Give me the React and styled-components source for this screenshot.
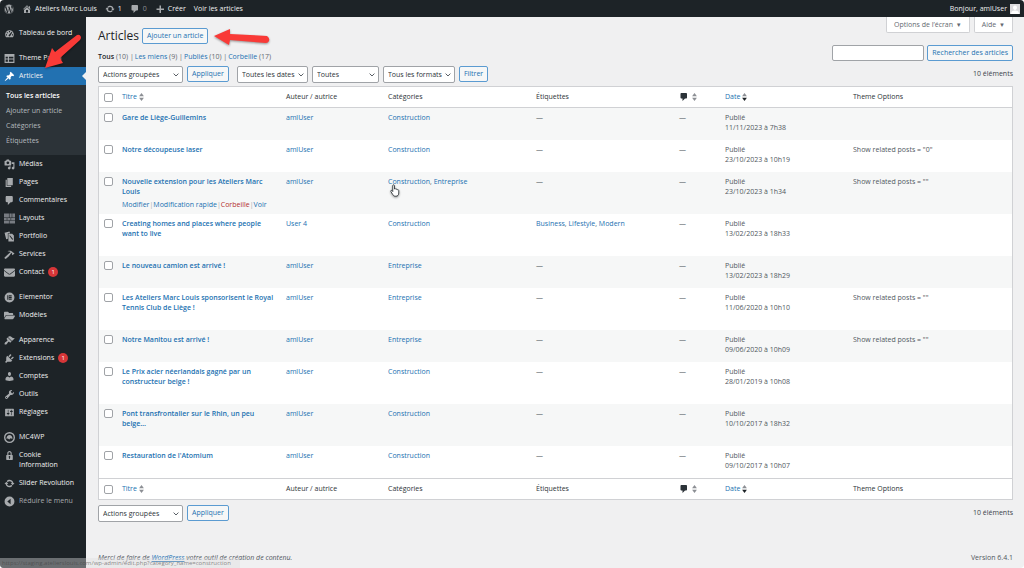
import React from 'react';
import styled, { createGlobalStyle } from 'styled-components';
import { FaWordpress, FaFolderOpen, FaEnvelope } from 'react-icons/fa';

const paths = {
  home: 'M16 8.5l1.53 1.53-1.06 1.06L10 4.6l-6.47 6.49-1.06-1.06L10 2.5l4 4v-2h2v4zm-6-2.46l6 5.99V18H4v-5.97zM12 17v-5H8v5h4z',
  update: 'M10.2 3.28c3.53 0 6.43 2.61 6.92 6h2.08l-3.5 4-3.5-4h2.32c-.45-1.97-2.21-3.45-4.32-3.45-1.45 0-2.73.71-3.54 1.78L4.95 5.66C6.23 4.2 8.11 3.28 10.2 3.28zm-.4 13.44c-3.52 0-6.43-2.61-6.92-6H.8l3.5-4c1.17 1.33 2.33 2.67 3.5 4H5.48c.45 1.97 2.21 3.45 4.32 3.45 1.45 0 2.73-.71 3.54-1.78l1.71 1.95c-1.28 1.46-3.15 2.38-5.25 2.38z',
  comment: 'M5 2h9c1.1 0 2 .9 2 2v7c0 1.1-.9 2-2 2h-2l-5 5v-5H5c-1.1 0-2-.9-2-2V4c0-1.1.9-2 2-2z',
  plus: 'M9 3h3v6h6v3h-6v6H9v-6H3V9h6V3z',
  dashboard: 'M3.76 17h12.48c1.1-1.4 1.76-3.17 1.76-5.1C18 7.54 14.42 4 10 4s-8 3.54-8 7.9c0 1.93.66 3.7 1.76 5.1zM9 5.5h2v2H9v-2zM5 7.5h2v2H5v-2zm-1.500 4h2v2h-2v-2zm11 0h2v2h-2v-2zM14 7l1 1-3.500 6.200c-.6 1-1.500 1.300-2.300.9-.9-.5-1-1.600-.3-2.400L14 7z',
  panel: 'M1 2h18v16H1V2zm2 5v3h4V7H3zm6 0v3h8V7H9zm-6 5v4h4v-4H3zm6 0v4h8v-4H9z',
  pin: 'M10.44 3.02l1.82-1.82 6.36 6.35-1.83 1.82c-1.05-.68-2.48-.57-3.41.36l-.75.75c-.92.93-1.04 2.35-.35 3.41l-1.83 1.82-2.41-2.41-2.8 2.79c-.42.42-3.38 2.71-3.8 2.29s1.86-3.39 2.28-3.81l2.79-2.79L4.1 9.36l1.83-1.82c1.05.69 2.48.57 3.4-.36l.75-.75c.93-.92 1.05-2.35.36-3.41z',
  media: 'M13 11V4c0-.55-.45-1-1-1h-1.67L9 1H5L3.67 3H2c-.55 0-1 .45-1 1v7c0 .55.45 1 1 1h10c.55 0 1-.45 1-1zM7 4.5c1.38 0 2.5 1.12 2.5 2.5S8.38 9.5 7 9.5 4.5 8.38 4.5 7 5.62 4.5 7 4.5zM14 6h5v10.5c0 1.38-1.12 2.5-2.5 2.5S14 17.88 14 16.5s1.12-2.5 2.5-2.5c.17 0 .34.02.5.05V9h-3V6zm-4 8.05V13h2v3.5c0 1.38-1.12 2.5-2.5 2.5S7 17.88 7 16.5 8.12 14 9.5 14c.17 0 .34.02.5.05z',
  pages: 'M6 15V2h10v13H6zm-1 1h8v2H3V5h2v11z',
  layouts: 'M0 1h9v7H0V1zm10 0h4v7h-4V1zm5 0h5v7h-5V1zM0 9h5v4H0V9zm6 0h6v4H6V9zm7 0h7v4h-7V9zM0 14h9v5H0v-5zm10 0h10v5H10v-5z',
  portfolio: 'M1 3l9-2 1 3H7v10l-3 1L1 3zm7 2h7l3 3v11H8V5zm2 3v1l5 7h1v-2l-5-6h-1z',
  hammer: 'M17.7 6.32l1.41 1.42-3.47 3.41-1.42-1.42.84-.82c-.32-.76-.81-1.57-1.51-2.31l-4.61 6.59-5.26 4.7c-.39.39-1.02.39-1.42 0l-1.2-1.21c-.39-.39-.39-1.02 0-1.41l10.97-9.92c-1.37-.86-3.21-1.46-5.67-1.48 2.7-.82 4.95-.93 6.58-.3 1.7.66 2.82 2.2 3.91 3.58z',
  elementor: 'M10 1a9 9 0 100 18 9 9 0 000-18zM6 6h2v8H6V6zm3 0h5v2H9V6zm0 3h5v2H9V9zm0 3h5v2H9v-2z',
  appearance: 'M14.48 11.06L7.41 3.99l1.5-1.5c.5-.56 2.3-.47 3.51.32 1.21.8 1.43 1.28 2.91 2.1 1.18.64 2.45 1.26 4.45.85zm-.71.71L6.7 4.7 4.93 6.47c-.39.39-.39 1.02 0 1.41l1.06 1.06c.39.39.39 1.03 0 1.42-.6.6-1.43 1.11-2.21 1.69-.35.26-.7.53-1.01.84C1.43 14.23.4 16.08 1.4 17.07c.99 1 2.84-.03 4.18-1.36.31-.31.58-.66.85-1.02.57-.78 1.08-1.61 1.69-2.21.39-.39 1.02-.39 1.41 0l1.06 1.06c.39.39 1.02.39 1.41 0z',
  plugins: 'M13.11 4.36L9.87 7.6 8 5.73l3.24-3.24c.35-.34 1.05-.2 1.56.32.52.51.66 1.21.31 1.55zm-8 1.77l.91-1.12 9.01 9.01-1.19.84c-.71.71-2.63 1.16-3.82 1.16H6.14L4.9 17.26c-.59.59-1.54.59-2.12 0-.59-.58-.59-1.53 0-2.12l1.24-1.24v-3.88c0-1.13.4-3.19 1.09-3.89zm7.26 3.97l3.24-3.24c.34-.35 1.04-.21 1.55.31.52.51.66 1.21.31 1.55l-3.24 3.25z',
  users: 'M10 9.25c-2.27 0-2.73-3.44-2.73-3.44C7 4.02 7.82 2 9.97 2c2.16 0 2.98 2.02 2.71 3.81 0 0-.41 3.44-2.68 3.44zm0 2.57L12.72 10c2.39 0 4.52 2.33 4.52 4.53v2.49s-3.65 1.13-7.24 1.13c-3.65 0-7.24-1.13-7.24-1.13v-2.49c0-2.25 1.94-4.48 4.47-4.48z',
  tools: 'M16.68 9.77c-1.34 1.34-3.3 1.67-4.95.99l-5.41 6.52c-.99.99-2.59.99-3.58 0s-.99-2.59 0-3.57l6.52-5.42c-.68-1.65-.35-3.61.99-4.95 1.28-1.28 3.12-1.62 4.72-1.06l-2.89 2.89 2.82 2.82 2.86-2.87c.53 1.58.18 3.39-1.08 4.65zM3.81 16.21c.4.39 1.04.39 1.43 0 .4-.4.4-1.04 0-1.43-.39-.4-1.03-.4-1.43 0-.39.39-.39 1.03 0 1.43z',
  settings: 'M18 16V4c0-.55-.45-1-1-1H3c-.55 0-1 .45-1 1v12c0 .55.45 1 1 1h14c.55 0 1-.45 1-1zM8 11h1c.55 0 1 .45 1 1s-.45 1-1 1H8v1.5c0 .28-.22.5-.5.5s-.5-.22-.5-.5V13H6c-.55 0-1-.45-1-1s.45-1 1-1h1V5.5c0-.28.22-.5.5-.5s.5.22.5.5V11zm5-2h-1c-.55 0-1-.45-1-1s.45-1 1-1h1V5.5c0-.28.22-.5.5-.5s.5.22.5.5V7h1c.55 0 1 .45 1 1s-.45 1-1 1h-1v5.5c0 .28-.22.5-.5.5s-.5-.22-.5-.5V9z',
  mailchimp: 'M10 0a10 10 0 110 20 10 10 0 010-20zm0 2.500a7.500 7.500 0 100 15 7.500 7.500 0 000-15zM4.500 12c0-3.500 2.500-6.500 5.500-6.500s5.500 3 5.500 6.500c-1.500 1-2.500-.5-3.500-.5s-1.500 2-2.500 2-1.500-1.500-2.500-1.500-1.500 1-2.500 0z',
  lock: 'M14 9h1c.55 0 1 .45 1 1v7c0 .55-.45 1-1 1H5c-.55 0-1-.45-1-1v-7c0-.55.45-1 1-1h1V6c0-2.21 1.79-4 4-4s4 1.79 4 4v3zm-2 0V6c0-1.1-.9-2-2-2s-2 .9-2 2v3h4zm-1 7l-.36-2.15c.51-.24.86-.75.86-1.35 0-.83-.67-1.5-1.5-1.5s-1.5.67-1.5 1.5c0 .6.35 1.11.86 1.35L9 16h2z',
  collapse: 'M10 1a9 9 0 110 18 9 9 0 010-18zm2 4l-6 5 6 5V5z',
};

const Glyph = ({ name }) => (
  <svg viewBox="0 0 20 20" fill="currentColor" fillRule="evenodd" aria-hidden="true">
    <path d={paths[name]} />
  </svg>
);

const Sorter = ({ active }) => (
  <SortIcon viewBox="0 0 6 10" aria-hidden="true">
    <path d="M3 0l3 4H0z" fill="#8c8f94" />
    <path d="M3 10L0 6h6z" fill={active ? '#1d2327' : '#8c8f94'} />
  </SortIcon>
);

const menu = [
  [{ icon: <Glyph name="dashboard" />, label: 'Tableau de bord' }],
  [
    { icon: <Glyph name="panel" />, label: 'Theme Panel' },
    {
      icon: <Glyph name="pin" />,
      label: 'Articles',
      sub: ['Tous les articles', 'Ajouter un article', 'Catégories', 'Étiquettes'],
    },
    { icon: <Glyph name="media" />, label: 'Médias' },
    { icon: <Glyph name="pages" />, label: 'Pages' },
    { icon: <Glyph name="comment" />, label: 'Commentaires' },
    { icon: <Glyph name="layouts" />, label: 'Layouts', dim: true },
    { icon: <Glyph name="portfolio" />, label: 'Portfolio' },
    { icon: <Glyph name="hammer" />, label: 'Services' },
    { icon: <FaEnvelope />, label: 'Contact', count: 1 },
  ],
  [
    { icon: <Glyph name="elementor" />, label: 'Elementor' },
    { icon: <FaFolderOpen />, label: 'Modèles' },
  ],
  [
    { icon: <Glyph name="appearance" />, label: 'Apparence' },
    { icon: <Glyph name="plugins" />, label: 'Extensions', count: 1 },
    { icon: <Glyph name="users" />, label: 'Comptes' },
    { icon: <Glyph name="tools" />, label: 'Outils' },
    { icon: <Glyph name="settings" />, label: 'Réglages' },
  ],
  [
    { icon: <Glyph name="mailchimp" />, label: 'MC4WP' },
    { icon: <Glyph name="lock" />, label: 'Cookie Information' },
    { icon: <Glyph name="update" />, label: 'Slider Revolution' },
    { icon: <Glyph name="collapse" />, label: 'Réduire le menu', muted: true },
  ],
];

const posts = [
  { title: 'Gare de Liège-Guillemins', cats: ['Construction'], date: '11/11/2023 à 7h38' },
  { title: 'Notre découpeuse laser', cats: ['Construction'], date: '23/10/2023 à 10h19', options: 'Show related posts = "0"' },
  { title: 'Nouvelle extension pour les Ateliers Marc Louis', cats: ['Construction', 'Entreprise'], date: '23/10/2023 à 1h34', options: 'Show related posts = ""', hovered: true },
  { title: 'Creating homes and places where people want to live', author: 'User 4', cats: ['Construction'], tags: ['Business', 'Lifestyle', 'Modern'], date: '13/02/2023 à 18h33' },
  { title: 'Le nouveau camion est arrivé !', cats: ['Entreprise'], date: '13/02/2023 à 18h29' },
  { title: 'Les Ateliers Marc Louis sponsorisent le Royal Tennis Club de Liège !', cats: ['Entreprise'], date: '11/06/2020 à 10h10', options: 'Show related posts = ""' },
  { title: 'Notre Manitou est arrivé !', cats: ['Entreprise'], date: '09/06/2020 à 10h09', options: 'Show related posts = ""' },
  { title: 'Le Prix acier néerlandais gagné par un constructeur belge !', cats: ['Construction'], date: '28/01/2019 à 10h08' },
  { title: 'Pont transfrontalier sur le Rhin, un peu belge…', cats: ['Construction'], date: '10/10/2017 à 18h32' },
  { title: "Restauration de l'Atomium", cats: ['Construction'], date: '09/10/2017 à 10h07' },
];

const views = [
  ['Tous', 10],
  ['Les miens', 9],
  ['Publiés', 10],
  ['Corbeille', 17],
];

const Links = ({ items }) =>
  items.map((item, i) => (
    <React.Fragment key={item}>
      {i > 0 && ', '}
      <Link href="#">{item}</Link>
    </React.Fragment>
  ));

const Dropdown = ({ label, text, width }) => (
  <SelectBox $width={width}>
    <select aria-label={label}>
      <option>{text}</option>
    </select>
    <svg viewBox="0 0 10 6" aria-hidden="true">
      <path d="M1 1l4 4 4-4" fill="none" stroke="#50575e" strokeWidth="1.600" />
    </svg>
  </SelectBox>
);

const BulkActions = () => (
  <Group>
    <Dropdown label="Actions groupées" text="Actions groupées" width={85} />
    <Button>Appliquer</Button>
  </Group>
);

const HeaderCells = () => (
  <tr>
    <th><Check type="checkbox" aria-label="Tout sélectionner" /></th>
    <th><Link href="#">Titre <Sorter /></Link></th>
    <th>Auteur / autrice</th>
    <th>Catégories</th>
    <th>Étiquettes</th>
    <th><CommentHead href="#" aria-label="Commentaires"><Glyph name="comment" /><Sorter /></CommentHead></th>
    <th><Link href="#">Date <Sorter active /></Link></th>
    <th>Theme Options</th>
  </tr>
);

const App = () => {
  return (
    <Page>
      <GlobalStyle />
      <AdminBar>
        <BarLink href="#" aria-label="WordPress"><FaWordpress /></BarLink>
        <BarLink href="#"><Glyph name="home" />Ateliers Marc Louis</BarLink>
        <BarLink href="#"><Glyph name="update" />1</BarLink>
        <BarLink href="#" $dim><Glyph name="comment" />0</BarLink>
        <BarLink href="#"><Glyph name="plus" />Créer</BarLink>
        <BarLink href="#">Voir les articles</BarLink>
        <Account href="#">
          Bonjour, amlUser
          <svg viewBox="0 0 20 20" aria-hidden="true">
            <path fill="#dcdcde" d="M0 0h20v20H0z" />
            <path fill="#fff" d="M10 3a4 4 0 014 4c0 3-2 5-4 5S6 10 6 7a4 4 0 014-4zM2 20c0-5 3-7 8-7s8 2 8 7z" />
          </svg>
        </Account>
      </AdminBar>

      <Body>
        <Sidebar>
          {menu.map((group, i) => (
            <MenuGroup key={i}>
              {group.map((item) => (
                <li key={item.label}>
                  <MenuLink href="#" $current={Boolean(item.sub)} $muted={item.muted}>
                    <MenuIcon $current={Boolean(item.sub)} $dim={item.dim}>{item.icon}</MenuIcon>
                    <span>{item.label}</span>
                    {item.count && <Badge>{item.count}</Badge>}
                  </MenuLink>
                  {item.sub && (
                    <SubMenu>
                      {item.sub.map((label, n) => (
                        <li key={label}><SubLink href="#" $current={n === 0}>{label}</SubLink></li>
                      ))}
                    </SubMenu>
                  )}
                </li>
              ))}
            </MenuGroup>
          ))}
        </Sidebar>

        <Content>
          <TitleRow>
            <Heading>
              <h1>Articles</h1>
              <Button>Ajouter un article</Button>
            </Heading>
            <ScreenMeta>
              <MetaTab>Options de l’écran <i>▼</i></MetaTab>
              <MetaTab>Aide <i>▼</i></MetaTab>
            </ScreenMeta>
          </TitleRow>

          <ViewsRow>
            <Views>
              {views.map(([label, count], i) => (
                <li key={label}>
                  <ViewLink href="#" $current={i === 0}>{label}</ViewLink> ({count}){i < views.length - 1 && ' |'}
                </li>
              ))}
            </Views>
            <Group $gap={3}>
              <SearchInput type="search" aria-label="Rechercher des articles" />
              <Button>Rechercher des articles</Button>
            </Group>
          </ViewsRow>

          <TableNav>
            <BulkActions />
            <Group>
              <Dropdown label="Filtrer par date" text="Toutes les dates" width={71} />
              <Dropdown label="Filtrer par catégorie" text="Toutes" width={67} />
              <Dropdown label="Filtrer par format" text="Tous les formats" width={72} />
              <Button>Filtrer</Button>
            </Group>
            <Total>10 éléments</Total>
          </TableNav>

          <Table>
            <colgroup>
              <Col $w={18} />
              <Col />
              <Col $w={102} />
              <Col $w={148} />
              <Col $w={143} />
              <Col $w={46} />
              <Col $w={128} />
              <Col />
            </colgroup>
            <thead><HeaderCells /></thead>
            <tbody>
              {posts.map((post) => (
                <tr key={post.title}>
                  <td><Check type="checkbox" aria-label={`Sélectionner ${post.title}`} /></td>
                  <td>
                    <PostTitle href="#">{post.title}</PostTitle>
                    <RowActions>
                      {post.hovered && (
                        <>
                          <Link href="#">Modifier</Link>|<Link href="#">Modification rapide</Link>|
                          <Link href="#" $danger>Corbeille</Link>|<Link href="#">Voir</Link>
                        </>
                      )}
                    </RowActions>
                  </td>
                  <td><Link href="#">{post.author || 'amlUser'}</Link></td>
                  <td><Links items={post.cats} /></td>
                  <td>{post.tags ? <Links items={post.tags} /> : '—'}</td>
                  <td>—</td>
                  <td>Publié<br />{post.date}</td>
                  <td>{post.options}</td>
                </tr>
              ))}
            </tbody>
            <tfoot><HeaderCells /></tfoot>
          </Table>

          <TableNav $bottom>
            <BulkActions />
            <Total>10 éléments</Total>
          </TableNav>

          <Footer>
            <em>Merci de faire de <a href="#">WordPress</a> votre outil de création de contenu.</em>
            <span>Version 6.4.1</span>
          </Footer>
        </Content>
      </Body>

      <StatusBar>https://staging.atelierslouis.com/wp-admin/edit.php?category_name=construction</StatusBar>

      <Overlay viewBox="0 0 280 80" $x={0} $y={0} $w={280} $h={80}>
        <path d="M45 68L52 48 55 52 77 35Q80 34 81 37 81 39 80 40L60 58 63 63z" fill="#f93a37" />
        <path d="M214 36L230 29 230 34 267 36Q270 38 269 41 268 43 266 43L230 40 229 45z" fill="#f93a37" />
      </Overlay>
      <Overlay viewBox="0 0 20 26" $x={390} $y={184} $w={10} $h={13}>
        <path
          d="M6 2c1.500-1 3 0 3 1.500V10c1-1 2.500-.5 3 .5 1-.6 2.300-.2 2.600.8 1.200-.5 2.900 0 2.900 2V18c0 4-2 6.500-6 6.500-3.500 0-5-1.500-6-3.500l-3.800-6c-.8-2 1.200-3 2.500-1.500L5.500 15V3.500C5.500 2.800 5.600 2.300 6 2z"
          fill="#fff"
          stroke="#1d2327"
          strokeWidth="1.600"
        />
      </Overlay>
    </Page>
  );
};

const GlobalStyle = createGlobalStyle`
  * {
    box-sizing: border-box;
  }
  body {
    margin: 0;
    background: #fff;
    color: #3c434a;
    font-family: "Open Sans", "Noto Sans", sans-serif;
    font-size: 7px;
    line-height: 10px;
  }
  ul {
    list-style: none;
    margin: 0;
    padding: 0;
  }
  a {
    text-decoration: none;
  }
  button, input, select {
    font: inherit;
    margin: 0;
  }
`;

const Page = styled.div`
  display: flex;
  flex-direction: column;
  min-height: 100vh;
  position: relative;
  overflow: hidden;
  border-radius: 4px;
  background: #f0f0f1;
`;

const AdminBar = styled.header`
  display: flex;
  align-items: center;
  gap: 8px;
  height: 17px;
  padding: 0 4px;
  background: #1d2327;
`;

const BarLink = styled.a`
  display: flex;
  align-items: center;
  gap: 3px;
  color: ${({ $dim }) => ($dim ? '#8c8f94' : '#f0f0f1')};

  svg {
    width: 10px;
    height: 10px;
    color: #a7aaad;
  }
`;

const Account = styled(BarLink)`
  margin-left: auto;
`;

const Body = styled.div`
  display: flex;
  flex: 1;
`;

const Sidebar = styled.nav`
  display: flex;
  flex-direction: column;
  flex: none;
  gap: 7px;
  width: 86px;
  padding-top: 7px;
  background: #1d2327;
`;

const MenuGroup = styled.ul`
  display: flex;
  flex-direction: column;
`;

const MenuLink = styled.a`
  position: relative;
  display: flex;
  align-items: flex-start;
  gap: 4px;
  padding: 4px 6px 4px 4px;
  color: ${({ $muted }) => ($muted ? '#a7aaad' : '#f0f0f1')};
  background: ${({ $current }) => ($current ? '#2271b1' : 'transparent')};

  &::after {
    content: '';
    display: ${({ $current }) => ($current ? 'block' : 'none')};
    position: absolute;
    right: 0;
    top: 5px;
    border: 4px solid transparent;
    border-right-color: #f0f0f1;
    border-left-width: 0;
  }
`;

const MenuIcon = styled.span`
  flex: none;
  width: 11px;
  height: 10px;
  color: ${({ $current, $dim }) => ($current ? '#fff' : $dim ? '#787c82' : '#a7aaad')};

  svg {
    display: block;
    width: 11px;
    height: 11px;
  }
`;

const Badge = styled.b`
  min-width: 10px;
  height: 10px;
  border-radius: 5px;
  background: #d63638;
  color: #fff;
  font-size: 6px;
  font-weight: 400;
  text-align: center;
`;

const SubMenu = styled.ul`
  padding: 3px 0 7px;
  background: #2c3338;
`;

const SubLink = styled.a`
  display: block;
  padding: 0 6px;
  line-height: 15px;
  color: ${({ $current }) => ($current ? '#fff' : '#b4b9be')};
  font-weight: ${({ $current }) => ($current ? 600 : 400)};
`;

const Content = styled.main`
  display: flex;
  flex-direction: column;
  flex: 1;
  min-width: 0;
  padding: 0 11px 5px 12px;
`;

const TitleRow = styled.div`
  display: flex;
  justify-content: space-between;
  align-items: flex-start;
  height: 28px;
`;

const Heading = styled.div`
  display: flex;
  align-items: center;
  gap: 3px;
  padding-top: 11px;

  h1 {
    margin: 0;
    color: #1d2327;
    font-size: 12px;
    line-height: 16px;
    font-weight: 400;
  }
`;

const Button = styled.button`
  height: 16px;
  padding: 0 4px;
  border: 1px solid #5b9bd1;
  border-radius: 2px;
  background: #f6f7f7;
  color: #2271b1;
  white-space: nowrap;
`;

const ScreenMeta = styled.div`
  display: flex;
  gap: 4px;
`;

const MetaTab = styled.button`
  height: 16px;
  padding: 0 7px;
  border: 1px solid #d0d1d4;
  border-top: 0;
  border-radius: 0 0 2px 2px;
  background: #fff;
  color: #646970;

  i {
    margin-left: 1px;
    font-size: 6px;
    font-style: normal;
  }
`;

const ViewsRow = styled.div`
  display: flex;
  justify-content: space-between;
  height: 21px;
`;

const Views = styled.ul`
  display: flex;
  gap: 1px;
  padding-top: 7px;
  color: #646970;
`;

const Link = styled.a`
  color: ${({ $danger }) => ($danger ? '#b32d2e' : '#2271b1')};
`;

const ViewLink = styled(Link)`
  ${({ $current }) => $current && 'color: #1d2327; font-weight: 600;'}
`;

const Group = styled.div`
  display: flex;
  align-items: flex-start;
  gap: ${({ $gap }) => $gap || 4}px;
`;

const SearchInput = styled.input`
  width: 92px;
  height: 16px;
  padding: 0 4px;
  border: 1px solid #a0a3a7;
  border-radius: 2px;
  background: #fff;
`;

const TableNav = styled.div`
  display: flex;
  gap: 8px;
  padding: ${({ $bottom }) => ($bottom ? '5px 0 0' : '0 0 3px')};
`;

const SelectBox = styled.span`
  display: grid;
  align-items: center;
  width: ${({ $width }) => $width}px;

  select,
  svg {
    grid-area: 1 / 1;
  }

  select {
    width: 100%;
    height: 17px;
    padding: 0 10px 0 4px;
    border: 1px solid #a0a3a7;
    border-radius: 2px;
    background: #fff;
    color: #2c3338;
    appearance: none;
  }

  svg {
    justify-self: end;
    width: 6px;
    margin-right: 4px;
    pointer-events: none;
  }
`;

const Total = styled.span`
  margin-left: auto;
  padding-top: 3px;
`;

const Table = styled.table`
  width: 100%;
  table-layout: fixed;
  border: 1px solid #d0d1d4;
  border-spacing: 0;
  background: #fff;

  th {
    height: 21px;
    padding: 0 0 0 5px;
    color: #2c3338;
    font-weight: 400;
    text-align: left;
  }

  thead th {
    border-bottom: 1px solid #d0d1d4;
  }

  tfoot th {
    border-top: 1px solid #d0d1d4;
  }

  td {
    padding: 5px 0 4px 5px;
    color: #50575e;
    vertical-align: top;
  }

  td:nth-child(2) {
    padding-right: 3px;
  }

  tbody tr:nth-child(odd) {
    background: #f6f7f7;
  }
`;

const Col = styled.col`
  width: ${({ $w }) => ($w ? `${$w}px` : 'auto')};
`;

const Check = styled.input`
  display: block;
  width: 9px;
  height: 9px;
  border: 1px solid #a0a3a7;
  border-radius: 2px;
  background: #fff;
  appearance: none;
`;

const SortIcon = styled.svg`
  width: 5px;
  height: 8px;
  vertical-align: middle;
`;

const CommentHead = styled.a`
  display: flex;
  align-items: center;
  gap: 3px;
  color: #2c3338;

  svg:first-child {
    width: 10px;
    height: 10px;
  }
`;

const PostTitle = styled(Link)`
  display: block;
  font-weight: 600;
`;

const RowActions = styled.div`
  display: flex;
  height: 10px;
  margin-top: 3px;
  color: #a7aaad;
  white-space: nowrap;
`;

const Footer = styled.footer`
  display: flex;
  justify-content: space-between;
  margin-top: auto;
  color: #50575e;

  a {
    color: #2271b1;
    text-decoration: underline;
  }
`;

const StatusBar = styled.div`
  position: absolute;
  left: 0;
  bottom: 0;
  width: 240px;
  padding-left: 2px;
  background: rgba(222, 222, 224, 0.4);
  color: rgba(60, 60, 60, 0.6);
  font-size: 6px;
  white-space: nowrap;
`;

const Overlay = styled.svg`
  position: absolute;
  left: ${({ $x }) => $x}px;
  top: ${({ $y }) => $y}px;
  width: ${({ $w }) => $w}px;
  height: ${({ $h }) => $h}px;
  pointer-events: none;
  filter: drop-shadow(0 1px 1px rgba(0, 0, 0, 0.4));
`;

export default App;
